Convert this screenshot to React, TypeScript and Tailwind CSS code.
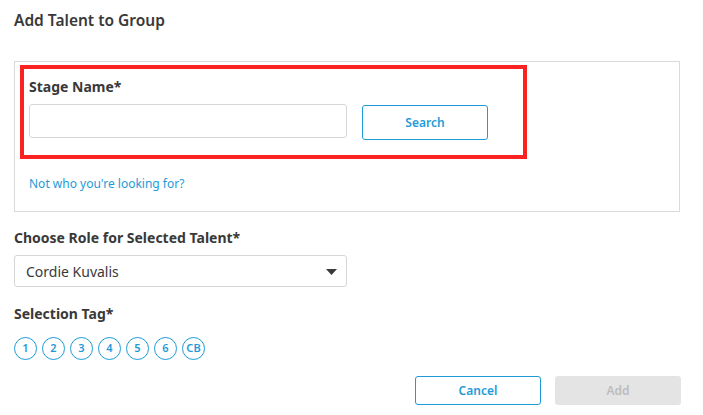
import { useState } from "react";

const tags = ["1", "2", "3", "4", "5", "6", "CB"];

function App() {
  const [name, setName] = useState("");
  const [tag, setTag] = useState<string | null>(null);

  return (
    <div className="min-h-screen bg-white font-['Noto_Sans',sans-serif] text-[#393939]">
      <div className="ml-[14px] w-[667px] pt-[10px]">
        <h2 className="text-[15.5px] leading-[20px] font-semibold">Add Talent to Group</h2>

        <div className="mt-[31px] w-[666px] border border-[#d9d9d9] pt-[3px] pl-[5px] pb-[19px]">
          <div className="w-[507px] border-4 border-[#fb2222] pt-[8px] pl-[5px] pb-[15px]">
            <label className="block text-[14px] leading-[20px] font-bold">Stage Name*</label>
            <div className="mt-[7px] flex items-start gap-[15px]">
              <input
                value={name}
                onChange={(e) => setName(e.target.value)}
                className="h-[34px] w-[318px] rounded-[3px] border border-[#d6d6d6] px-3 text-[14px] outline-none"
              />
              <button
                type="button"
                className="mt-px h-[35px] w-[126px] rounded-[3px] border border-[#1e9bd7] text-[12px] font-semibold text-[#1e9bd7]"
              >
                Search
              </button>
            </div>
          </div>
          <a href="#" className="mt-[17px] ml-[9px] block text-[12px] leading-[16px] text-[#1e9bd7]">
            Not who you're looking for?
          </a>
        </div>

        <label className="mt-[16px] block text-[14px] leading-[20px] font-bold">
          Choose Role for Selected Talent*
        </label>
        <div className="relative mt-[7px] flex h-[32px] w-[333px] items-center rounded-[3px] border border-[#d6d6d6] pl-[11px] text-[14px]">
          Cordie Kuvalis
          <svg className="absolute right-[9px] top-[13px]" width="11" height="6" viewBox="0 0 11 6">
            <path d="M0 0h11L5.5 6z" fill="#3a3a3a" />
          </svg>
        </div>

        <label className="mt-[17px] block text-[14px] leading-[20px] font-bold">Selection Tag*</label>
        <div className="mt-[13px] flex gap-[5px]">
          {tags.map((t) => (
            <button
              key={t}
              type="button"
              onClick={() => setTag(t)}
              className={`flex h-[23px] w-[23px] items-center justify-center rounded-full border border-[#1e9bd7] text-[11px] font-semibold ${
                tag === t ? "bg-[#1e9bd7] text-white" : "text-[#1e9bd7]"
              }`}
            >
              {t}
            </button>
          ))}
        </div>

        <div className="mt-[16px] flex justify-end gap-[14px]">
          <button
            type="button"
            className="h-[29px] w-[126px] rounded-[3px] border border-[#1e9bd7] text-[12px] font-semibold text-[#1e9bd7]"
          >
            Cancel
          </button>
          <button
            type="button"
            disabled
            className="h-[29px] w-[126px] rounded-[3px] bg-[#e4e4e4] text-[12px] font-semibold text-[#bcbcbc]"
          >
            Add
          </button>
        </div>
      </div>
    </div>
  );
}

export default App;
